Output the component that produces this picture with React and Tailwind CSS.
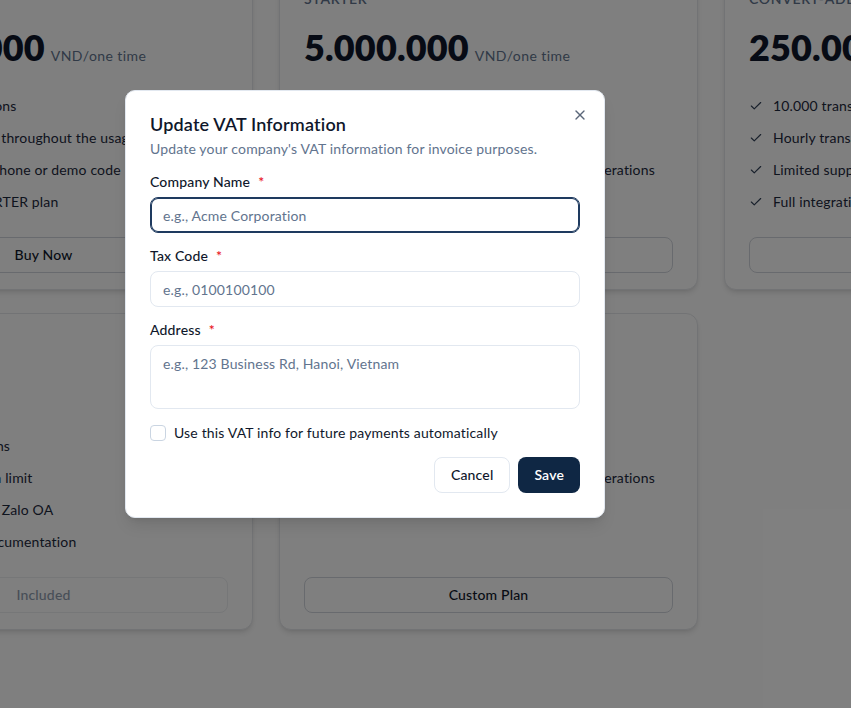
import React from 'react';
import { Check, X } from 'lucide-react';

const topPlans = [
  {
    key: 'basic',
    label: 'BASIC',
    price: '10.000.000',
    unit: 'VND/one time',
    features: [
      '100.000 transactions',
      'Data sync support throughout the usage period',
      'Register via your Phone or demo code',
      'Discounts on STARTER plan',
    ],
    cta: 'Buy Now',
  },
  {
    key: 'starter',
    label: 'STARTER',
    price: '5.000.000',
    unit: 'VND/one time',
    features: [
      '50.000 transactions',
      'Hourly transaction sync',
      'Free technical support during integration operations',
      'Priority support',
    ],
    cta: 'Buy Now',
  },
  {
    key: 'addon',
    label: 'CONVERT-ADDON',
    price: '250.000',
    unit: 'VND/one time',
    features: [
      '10.000 transactions',
      'Hourly transaction sync',
      'Limited support',
      'Full integration documentation',
    ],
    cta: 'Buy Now',
  },
];

const bottomPlans = [
  {
    key: 'free',
    label: 'FREE',
    price: '0',
    unit: '',
    features: [
      'Limited transactions',
      'No API transaction limit',
      'Payment alerts via Zalo OA',
      'Full integration documentation',
    ],
    cta: 'Included',
    disabled: true,
  },
  {
    key: 'enterprise',
    label: 'ENTERPRISE',
    price: 'Contact',
    unit: '',
    features: [
      'Unlimited transactions',
      'Free technical support during integration operations',
      'Custom SLA',
    ],
    cta: 'Custom Plan',
  },
];

const PlanCard = ({ plan, featuresTop }) => (
  <div className="w-[419px] shrink-0 flex flex-col bg-white border border-gray-200 rounded-xl shadow-md px-6 pt-6 pb-4">
    <div className="text-sm leading-5 font-semibold tracking-wider text-slate-500 whitespace-nowrap">{plan.label}</div>
    <div className="mt-[18px] flex items-baseline gap-1.5 whitespace-nowrap">
      <span className="text-4xl leading-10 font-extrabold text-slate-900">{plan.price}</span>
      {plan.unit && <span className="text-sm tracking-[0.03em] text-slate-500">{plan.unit}</span>}
    </div>
    <ul className={`${featuresTop} flex-1 space-y-3`}>
      {plan.features.map((f, i) => (
        <li key={i} className="flex items-center gap-2.5 text-sm leading-5 text-slate-800 whitespace-nowrap">
          <Check className="w-3.5 h-3.5 text-slate-700 shrink-0" strokeWidth={2} />
          <span>{f}</span>
        </li>
      ))}
    </ul>
    <button
      className={`mt-[25px] w-full h-9 rounded-lg border text-sm font-medium bg-white ${
        plan.disabled ? 'border-gray-200 text-slate-500 opacity-70' : 'border-gray-300 text-slate-900'
      }`}
    >
      {plan.cta}
    </button>
  </div>
);

const Field = ({ label, placeholder, focused }) => (
  <div className="space-y-2">
    <label className="block h-[14px] text-sm leading-none font-medium text-slate-900">
      {label}
      <span className="ml-2 text-red-600">*</span>
    </label>
    <input
      placeholder={placeholder}
      className={`w-full h-9 rounded-lg border px-3 text-sm bg-white text-slate-900 placeholder:text-slate-500 outline-none ${
        focused ? 'border-[#1e3a5f] shadow-[inset_0_0_0_1px_#1e3a5f]' : 'border-slate-200'
      }`}
    />
  </div>
);

export default function App() {
  return (
    <div className="relative h-[708px] w-[851px] overflow-hidden bg-white font-['Lato',sans-serif] tracking-[0.01em]">
      {/* Pricing grid behind the dialog */}
      <div className="ml-[-166px] mt-[-36px] flex flex-col gap-[23px]">
        <div className="flex gap-[26px]">
          {topPlans.map(p => (
            <PlanCard key={p.key} plan={p} featuresTop="mt-[29px]" />
          ))}
        </div>
        <div className="flex gap-[26px]">
          {bottomPlans.map(p => (
            <PlanCard key={p.key} plan={p} featuresTop="mt-5" />
          ))}
        </div>
      </div>

      {/* Overlay */}
      <div className="absolute inset-0 bg-black/50" />

      {/* Dialog */}
      <div className="absolute left-[125px] top-[90px] w-[480px] bg-white border border-slate-200 rounded-[10px] shadow-lg p-6 grid gap-4">
        <button className="absolute right-4 top-4 text-slate-700 opacity-80">
          <X className="w-4 h-4" strokeWidth={2} />
        </button>
        <div className="space-y-1.5">
          <h2 className="text-lg leading-none font-semibold text-slate-900">Update VAT Information</h2>
          <p className="text-sm leading-5 text-slate-500">Update your company's VAT information for invoice purposes.</p>
        </div>
        <Field label="Company Name" placeholder="e.g., Acme Corporation" focused />
        <Field label="Tax Code" placeholder="e.g., 0100100100" />
        <div className="space-y-2">
          <label className="block h-[14px] text-sm leading-none font-medium text-slate-900">
            Address
            <span className="ml-2 text-red-600">*</span>
          </label>
          <textarea
            placeholder="e.g., 123 Business Rd, Hanoi, Vietnam"
            className="block w-full h-16 resize-none rounded-lg border border-slate-200 px-3 py-2 text-sm leading-5 bg-white placeholder:text-slate-500 outline-none"
          />
        </div>
        <div className="flex items-center gap-2">
          <span className="w-4 h-4 rounded-[4px] border border-slate-300 bg-white shrink-0" />
          <span className="text-sm leading-4 text-slate-900">Use this VAT info for future payments automatically</span>
        </div>
        <div className="flex justify-end gap-2">
          <button className="h-9 px-4 rounded-lg border border-slate-200 bg-white text-sm font-medium text-slate-900">Cancel</button>
          <button className="h-9 px-4 rounded-lg bg-[#0f2744] text-sm font-semibold text-white">Save</button>
        </div>
      </div>
    </div>
  );
}
